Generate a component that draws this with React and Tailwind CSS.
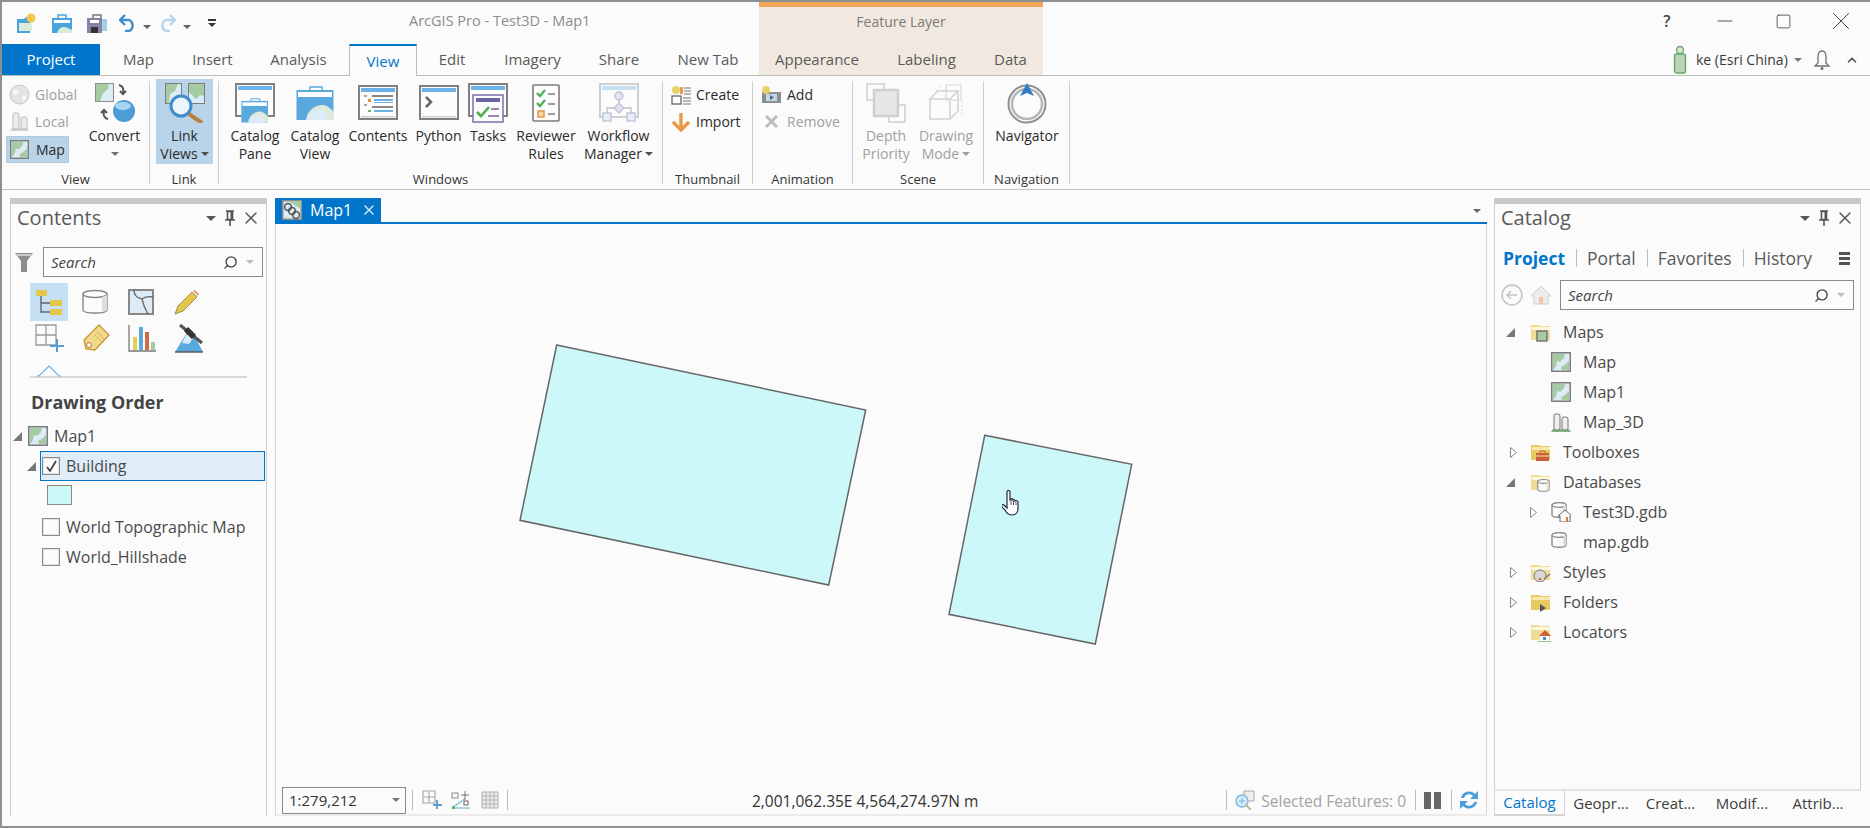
import { ChevronUp, Minus, Search, Square, X } from 'lucide-react';

const Caret = ({ className = 'border-t-[#606060]' }) => (
  <span className={`inline-block h-0 w-0 border-x-[4px] border-t-[4px] border-x-transparent ${className}`} />
);

const Sep = ({ h = 'h-[20px]' }) => <span className={`block w-px shrink-0 bg-[#bdbdbd] ${h}`} />;

const Ic = ({ w = 20, h = 20, vw, vh, children, className = '' }) => (
  <svg width={w} height={h} viewBox={`0 0 ${vw || w} ${vh || h}`} className={`shrink-0 ${className}`}>{children}</svg>
);

const MapIcon = ({ size = 20, dim }) => (
  <Ic w={size} h={size} vw={20} vh={20} className={dim ? 'opacity-60' : ''}>
    <rect x="0.75" y="0.75" width="18.5" height="18.5" fill="#dcebf5" stroke="#7c7c7c" strokeWidth="1.5" />
    <path d="M2 2h12l-1 4-4 4-3-1-1 5-3 4z" fill="#a5cba3" />
    <path d="M18 9l-4 4-4 2 1 3h7z" fill="#a5cba3" />
  </Ic>
);

const FolderBase = ({ children, light }) => (
  <Ic w={20} h={20}>
    <path d="M0 3h8l1 1h10v14H0z" fill={light ? '#f0dd95' : '#e6c95f'} />
    <path d="M1 5h18v3H1z" fill={light ? '#fdf7dd' : '#f7e9ad'} />
    {children}
  </Ic>
);

const Db = ({ x = 0, y = 0, s = 1 }) => (
  <g transform={`translate(${x} ${y}) scale(${s})`}>
    <path d="M1 3v10c0 3 14 3 14 0V3" fill="#fbfbfb" stroke="#8a8a8a" strokeWidth="1.4" />
    <ellipse cx="8" cy="3" rx="7" ry="2.4" fill="#fbfbfb" stroke="#8a8a8a" strokeWidth="1.4" />
    <path d="M12 5v10l3-2V3z" fill="#dcdcdc" />
  </g>
);

const Win = ({ children, stroke = '#808080', bar = '#6cb2e6', w = 40, h = 36 }) => (
  <svg width={w} height={h} viewBox="0 0 40 36" className="shrink-0">
    <rect x="1" y="1" width="38" height="33" fill="#fcfcfc" stroke={stroke} strokeWidth="2" />
    <rect x="3" y="3" width="34" height="4" fill={bar} />
    <rect x="3" y="31" width="34" height="1.5" fill="#cfcfcf" />
    {children}
  </svg>
);

const CatalogGlyph = ({ x = 0, y = 0, s = 1 }) => (
  <g transform={`translate(${x} ${y}) scale(${s})`}>
    <path d="M14 4V1h12v3" fill="none" stroke="#5aa9dd" strokeWidth="1.4" />
    <rect x="0.5" y="4" width="37" height="30" fill="#5aa9dd" />
    <rect x="2" y="6" width="34" height="5" fill="#fcfcfc" />
    <path d="M10 34c1-10 10-16 18-15 4 1 7 4 10 7v8z" fill="#dce9dc" />
    <path d="M10 34c3-7 9-11 15-10 4 1 6 5 7 10z" fill="#dcecf8" />
  </g>
);

const LargeBtn = ({ w, lines, icon, dim, caret, caretLine }) => (
  <div className={`flex shrink-0 flex-col items-center ${w} ${dim ? 'text-[#a0a0a0]' : 'text-[#2b2b2b]'}`}>
    <div className="flex h-[40px] items-center justify-center">{icon}</div>
    <div className="mt-[4px] text-center text-[14px] leading-[18px] whitespace-nowrap">
      {lines.map((l, i) => (
        <div key={l} className="flex items-center justify-center gap-[3px]">
          {l}
          {caret && i === lines.length - 1 && <Caret className={dim ? 'border-t-[#a0a0a0]' : 'border-t-[#505050]'} />}
        </div>
      ))}
      {caretLine && <div className="flex h-[18px] items-center justify-center"><Caret className="border-t-[#707070]" /></div>}
    </div>
  </div>
);

const Group = ({ w, label, children }) => (
  <div className={`mt-[5px] flex h-[103px] shrink-0 flex-col border-r border-[#cdcdcd] ${w}`}>
    <div className="flex min-h-0 flex-1 pt-[2px]">{children}</div>
    <div className="h-[10px] text-center text-[13px] leading-[10px] whitespace-nowrap text-[#333333]">{label}</div>
  </div>
);

const SmallBtn = ({ icon, label, dim, gap = 'gap-[5px]' }) => (
  <div className={`flex h-[27px] items-center whitespace-nowrap text-[14px] ${gap} ${dim ? 'text-[#a0a0a0]' : 'text-[#2b2b2b]'}`}>
    {icon}{label}
  </div>
);

const Tab = ({ w, label, active }) => (
  <div className={`flex shrink-0 items-center justify-center text-[15px] ${w} ${active
    ? 'relative z-10 -mb-px h-[32px] border-x border-t-2 border-x-[#bdbdbd] border-t-[#0075c9] bg-[#fbfbfb] text-[#0075c9]'
    : 'h-[31px] text-[#5a5a5a]'}`}>{label}</div>
);

const TitleBar = () => (
  <div className="flex h-[42px] items-center text-[#333]">
    <div className="flex w-[15px]" />
    <Ic w={20} h={20}>
      <path d="M0 6h7l2-2h4v16H0z" fill="#4aa3dd" /><path d="M2 10h13v8H2z" fill="#d8ecd8" /><circle cx="14" cy="5" r="4.5" fill="#f1c84c" />
    </Ic>
    <div className="w-[15px]" />
    <Ic w={20} h={20}>
      <path d="M6 5V2h8v3" fill="none" stroke="#4aa3dd" strokeWidth="1.5" /><rect y="5" width="20" height="15" fill="#4aa3dd" /><rect x="2" y="7" width="16" height="3" fill="#fff" /><path d="M5 20c2-6 7-7 11-5l4 2v3z" fill="#d8ecd8" />
    </Ic>
    <div className="w-[15px]" />
    <Ic w={20} h={20}>
      <path d="M6 5V2h8v3" fill="none" stroke="#777" strokeWidth="1.5" /><rect y="5" width="15" height="15" fill="#8a7fa8" /><rect x="3" y="7" width="9" height="3" fill="#fff" /><rect x="4" y="14" width="7" height="6" fill="#333" /><rect x="15" y="6" width="5" height="12" fill="#9ed0e8" />
    </Ic>
    <div className="w-[12px]" />
    <Ic w={18} h={18}>
      <path d="M6 1L1 6l5 5M1 6h9a6 6 0 0 1 0 11H6" fill="none" stroke="#3f8ecb" strokeWidth="2.4" />
    </Ic>
    <div className="ml-[6px]"><Caret /></div>
    <div className="w-[7px]" />
    <Ic w={18} h={18}>
      <path d="M12 1l5 5-5 5M17 6H8a6 6 0 0 0 0 11h4" fill="none" stroke="#b9d4e8" strokeWidth="2.4" />
    </Ic>
    <div className="ml-[7px]"><Caret /></div>
    <div className="ml-[17px] flex flex-col items-center gap-[2px]">
      <span className="block h-[2px] w-[8px] bg-[#333]" />
      <Caret className="border-t-[#333]" />
    </div>
    <div className="ml-[193px] pb-[4px] text-[14.5px] whitespace-nowrap text-[#8c8c8c]">ArcGIS Pro - Test3D - Map1</div>
  </div>
);

const Header = () => (
  <div className="flex">
    <div className="w-[757px] shrink-0">
      <TitleBar />
      <div className="flex h-[32px] border-b border-[#bdbdbd]">
        <div className="flex h-[31px] w-[98px] items-center justify-center bg-[#0075c9] text-[15px] text-white">Project</div>
        <Tab w="w-[77px]" label="Map" />
        <Tab w="w-[71px]" label="Insert" />
        <Tab w="w-[101px]" label="Analysis" />
        <Tab w="w-[68px]" label="View" active />
        <Tab w="w-[70px]" label="Edit" />
        <Tab w="w-[91px]" label="Imagery" />
        <Tab w="w-[82px]" label="Share" />
        <Tab w="w-[96px]" label="New Tab" />
      </div>
    </div>
    <div className="w-[284px] shrink-0">
      <div className="h-[42px] bg-[#f1e9df]">
        <div className="h-[5px] bg-[#efa656]" />
        <div className="pt-[5px] text-center text-[14px] leading-[20px] text-[#7a7a7a]">Feature Layer</div>
      </div>
      <div className="flex h-[32px] border-b border-[#bdbdbd] bg-[#f1e9df]">
        <Tab w="w-[116px]" label="Appearance" />
        <Tab w="w-[103px]" label="Labeling" />
        <Tab w="w-[65px]" label="Data" />
      </div>
    </div>
    <div className="min-w-0 flex-1">
      <div className="flex h-[42px] items-center pb-[4px] pl-[595px] text-[#444]">
        <span className="w-[58px] shrink-0 text-center text-[16px] font-semibold">?</span>
        <span className="flex w-[58px] shrink-0 justify-center"><Minus size={24} strokeWidth={0.9} /></span>
        <span className="flex w-[58px] shrink-0 justify-center"><Square size={17} strokeWidth={1.2} /></span>
        <span className="flex w-[58px] shrink-0 justify-center"><X size={30} strokeWidth={0.8} /></span>
      </div>
      <div className="flex h-[32px] items-center border-b border-[#bdbdbd]">
        <Ic w={14} h={30} vw={14} vh={30} className="ml-[630px]">
          <circle cx="7" cy="5" r="3.5" fill="#d7e8d5" stroke="#6aa36b" strokeWidth="1.3" />
          <rect x="1.5" y="9" width="11" height="19" rx="2" fill="#b6d7b3" stroke="#6aa36b" strokeWidth="1.3" />
        </Ic>
        <span className="ml-[9px] text-[14px] whitespace-nowrap text-[#3a3a3a]">ke (Esri China)</span>
        <span className="ml-[6px] flex"><Caret className="border-t-[#777]" /></span>
        <Ic w={18} h={22} className="ml-[11px]">
          <path d="M9 2c-3 0-4 3-4 6v6l-3 3h14l-3-3V8c0-3-1-6-4-6z" fill="none" stroke="#6f6f6f" strokeWidth="1.3" />
          <circle cx="9" cy="19.5" r="1.5" fill="#6f6f6f" />
        </Ic>
        <ChevronUp size={14} strokeWidth={3} className="ml-[14px] text-[#555]" />
      </div>
    </div>
  </div>
);

const Ribbon = () => (
  <div className="flex h-[114px] border-b border-[#c4c4c4]">
    <Group w="w-[148px]" label="View">
      <div className="-mt-[2px] ml-[4px] w-[63px] shrink-0">
        <SmallBtn dim label="Global" gap="gap-[5px] pl-[3px]" icon={
          <Ic w={21} h={21} className="opacity-70">
            <circle cx="10.5" cy="10.5" r="9.5" fill="#d9d9d9" stroke="#b3b3b3" /><path d="M4 5c3 1 5 0 6 3l-3 4-3-2zM13 12l4-1 0 4-3 3z" fill="#f5f5f5" />
          </Ic>
        } />
        <SmallBtn dim label="Local" gap="gap-[5px] pl-[3px]" icon={
          <Ic w={21} h={21}>
            <path d="M1 20l2-3h15l2 3z" fill="#d0d0d0" /><rect x="4" y="2" width="6" height="16" rx="2" fill="#ececec" stroke="#bdbdbd" /><rect x="12" y="6" width="6" height="12" rx="2" fill="#ececec" stroke="#bdbdbd" />
          </Ic>
        } />
        <div className="mt-[1px] flex h-[27px] items-center gap-[7px] border border-[#afcbe3] bg-[#b9d3e9] pl-[3px] text-[14px] text-[#2b2b2b]">
          <MapIcon size={19} />Map
        </div>
      </div>
      <div className="ml-[11px] shrink-0">
        <LargeBtn w="w-[69px]" lines={['Convert']} caretLine icon={
          <Ic w={40} h={40}>
            <rect x="0.5" y="0.5" width="18" height="18" fill="#dcebf5" stroke="#8c8c8c" />
            <path d="M1 1h13l-1 5-5 4-3 8H1z" fill="#a5cba3" />
            <path d="M24 2c4 1 5 4 4 8m-3-2l3 3 3-3" fill="none" stroke="#555" strokeWidth="2" />
            <path d="M13 36c-4-1-5-4-4-8m-3 2l3-3 3 3" fill="none" stroke="#555" strokeWidth="2" />
            <circle cx="29" cy="28" r="11" fill="#4d9cd6" /><ellipse cx="28" cy="23" rx="8" ry="4" fill="#a8d4f0" />
          </Ic>
        } />
      </div>
    </Group>
    <Group w="w-[69px]" label="Link">
      <div className="-mt-[4px] ml-[6px] flex h-[85px] w-[57px] shrink-0 justify-center bg-[#b9d3e9] pt-[4px]">
        <LargeBtn w="w-[57px]" lines={['Link', 'Views']} caret icon={
          <Ic w={40} h={40}>
            <rect x="0.5" y="0.5" width="16" height="20" fill="#dcebf5" stroke="#7c7c7c" /><path d="M1 1h12l-3 7-5 3-1 9H1z" fill="#a5cba3" />
            <rect x="23.5" y="0.5" width="16" height="20" fill="#dcebf5" stroke="#7c7c7c" /><path d="M24 1h15v12l-4-1-4 4-7-7z" fill="#a5cba3" />
            <circle cx="16" cy="23" r="10" fill="#eaf5fc" stroke="#3f8ecb" strokeWidth="3" />
            <path d="M24 31l13 9" stroke="#b9803e" strokeWidth="4" />
          </Ic>
        } />
      </div>
    </Group>
    <Group w="w-[444px]" label="Windows">
      <div className="ml-[6px] flex">
        <LargeBtn w="w-[60px]" lines={['Catalog', 'Pane']} icon={
          <svg width="40" height="40" viewBox="0 0 40 40">
            <rect x="1" y="1" width="38" height="32" fill="#fcfcfc" stroke="#808080" strokeWidth="2" />
            <rect x="3" y="3" width="34" height="4" fill="#6cb2e6" />
            <CatalogGlyph x="6" y="15" s="0.72" />
          </svg>
        } />
        <LargeBtn w="w-[60px]" lines={['Catalog', 'View']} icon={<svg width="38" height="36" viewBox="0 0 38 34"><CatalogGlyph /></svg>} />
        <LargeBtn w="w-[66px]" lines={['Contents']} icon={
          <Win>
            <path d="M6 11h3M6 20h3" stroke="#888" strokeWidth="1.5" />
            <rect x="14" y="10" width="21" height="2" fill="#888" /><rect x="16" y="14" width="19" height="2" fill="#6cb2e6" /><rect x="16" y="17" width="19" height="1" fill="#6cb2e6" />
            <rect x="14" y="21" width="21" height="2" fill="#888" /><rect x="16" y="25" width="19" height="2" fill="#6cb2e6" /><rect x="10" y="14" width="3" height="3" fill="#e78b3e" /><rect x="10" y="25" width="3" height="2" fill="#68b36b" />
          </Win>
        } />
        <LargeBtn w="w-[55px]" lines={['Python']} icon={
          <Win><path d="M7 12l5 5-5 5" fill="none" stroke="#666" strokeWidth="2.5" /></Win>
        } />
        <LargeBtn w="w-[44px]" lines={['Tasks']} icon={
          <svg width="40" height="40" viewBox="0 0 40 40">
            <rect x="1" y="1" width="38" height="32" fill="#fcfcfc" stroke="#808080" strokeWidth="2" />
            <rect x="3" y="3" width="34" height="4" fill="#6cb2e6" />
            <rect x="5" y="12" width="30" height="27" fill="#fcfcfc" stroke="#8279ae" strokeWidth="1.6" />
            <rect x="8" y="15" width="24" height="4" fill="#6a66a3" />
            <path d="M9 29l4 4 8-9" fill="none" stroke="#4caf50" strokeWidth="2.6" />
            <path d="M23 26h8M20 33h11" stroke="#6a66a3" strokeWidth="1.4" />
          </svg>
        } />
        <LargeBtn w="w-[72px]" lines={['Reviewer', 'Rules']} icon={
          <Ic w={28} h={38}>
            <rect x="1" y="1" width="26" height="36" rx="1" fill="#fcfcfc" stroke="#7c7c7c" strokeWidth="1.6" />
            <path d="M5 9l3 3 5-6M5 19l3 3 5-6" fill="none" stroke="#4caf50" strokeWidth="2.2" />
            <path d="M16 10h7M16 20h7M16 30h7" stroke="#7c7c7c" strokeWidth="1.5" />
            <rect x="6" y="27" width="6" height="6" fill="#f6d7ae" stroke="#e9933f" strokeWidth="1.5" />
          </Ic>
        } />
        <LargeBtn w="w-[73px]" lines={['Workflow', 'Manager']} caret icon={
          <svg width="40" height="40" viewBox="0 0 40 40">
            <rect x="1" y="1" width="38" height="33" fill="#fcfcfc" stroke="#cfcfcf" strokeWidth="2" />
            <rect x="3" y="3" width="34" height="4" fill="#c6dff2" />
            <circle cx="20" cy="13" r="4" fill="#e3e3ef" stroke="#bfc3dc" strokeWidth="1.4" />
            <path d="M20 17v3M15 25H8v5M25 25h7v5" fill="none" stroke="#c4c4c4" strokeWidth="1.4" />
            <path d="M20 20l5 5-5 5-5-5z" fill="#e3e3ef" stroke="#bfc3dc" strokeWidth="1.4" />
            <rect x="4" y="30" width="8" height="8" fill="#e8eef8" stroke="#bfc3dc" strokeWidth="1.4" />
            <rect x="28" y="30" width="8" height="8" fill="#e8eef8" stroke="#bfc3dc" strokeWidth="1.4" />
          </svg>
        } />
      </div>
    </Group>
    <Group w="w-[90px]" label="Thumbnail">
      <div className="ml-[8px] -mt-[2px]">
        <SmallBtn label="Create" gap="gap-[5px]" icon={
          <Ic w={20} h={20}>
            <circle cx="5" cy="5" r="4" fill="#e6d26a" /><rect x="1" y="11" width="9" height="8" fill="#fcfcfc" stroke="#666" strokeWidth="1.3" />
            <rect x="9" y="2" width="3" height="7" fill="#e89a4f" />
            <path d="M13 3h7M13 6h7M13 9h7M12 13h8M12 16h8M12 19h8" stroke="#777" strokeWidth="1.2" />
          </Ic>
        } />
        <SmallBtn label="Import" gap="gap-[5px]" icon={
          <Ic w={20} h={20}>
            <path d="M10 1v16M2 10l8 8 8-8" fill="none" stroke="#e99a46" strokeWidth="3.4" />
          </Ic>
        } />
      </div>
    </Group>
    <Group w="w-[100px]" label="Animation">
      <div className="ml-[8px] -mt-[2px]">
        <SmallBtn label="Add" gap="gap-[6px]" icon={
          <Ic w={20} h={20}>
            <rect x="1" y="7" width="19" height="11" fill="#8d8d8d" /><rect x="5" y="9" width="11" height="7" fill="#bcd9ee" /><path d="M9 10l4 2.5-4 2.5z" fill="#666" /><circle cx="5" cy="5" r="4" fill="#e6d26a" />
          </Ic>
        } />
        <SmallBtn dim label="Remove" gap="gap-[9px] pl-[4px]" icon={
          <Ic w={13} h={13}><path d="M1 1l11 11M12 1L1 12" stroke="#bdbdbd" strokeWidth="3" /></Ic>
        } />
      </div>
    </Group>
    <Group w="w-[131px]" label="Scene">
      <div className="flex">
        <LargeBtn dim w="w-[66px]" lines={['Depth', 'Priority']} icon={
          <Ic w={40} h={40}>
            <rect x="1" y="1" width="17" height="16" fill="#fcfcfc" stroke="#cfcfcf" strokeWidth="1.5" />
            <rect x="23" y="22" width="16" height="17" fill="#fcfcfc" stroke="#cfcfcf" strokeWidth="1.5" />
            <rect x="8" y="7" width="24" height="26" fill="#e7e7e7" stroke="#cfcfcf" strokeWidth="2.5" />
          </Ic>
        } />
        <LargeBtn dim caret w="w-[54px]" lines={['Drawing', 'Mode']} icon={
          <Ic w={36} h={40}>
            <path d="M2 16h20v20H2zM2 16l8-8h20l-8 8M22 36l8-8V8" fill="#fbfbfb" stroke="#d2d2d2" strokeWidth="1.5" />
            <path d="M18 2h15v15H18z" fill="none" stroke="#d8d8d8" strokeWidth="1.2" />
            <path d="M8 8l6-6M34 18v14" stroke="#d8d8d8" strokeDasharray="2 2" />
          </Ic>
        } />
      </div>
    </Group>
    <Group w="w-[86px]" label="Navigation">
      <LargeBtn w="w-[86px]" lines={['Navigator']} icon={
        <Ic w={42} h={42}>
          <circle cx="21" cy="22" r="18.5" fill="none" stroke="#8f8f8f" strokeWidth="2" />
          <circle cx="21" cy="22" r="15" fill="none" stroke="#b5b5b5" strokeWidth="2.4" />
          <path d="M21 1l7 13-7-3-7 3z" fill="#2f7fc4" />
        </Ic>
      } />
    </Group>
  </div>
);

const PaneHeader = ({ title }) => (
  <div className="flex h-[28px] shrink-0 items-center">
    <span className="ml-[6px] text-[20px] text-[#5a5a5a]">{title}</span>
    <div className="ml-auto mr-[5px] flex items-center text-[#555]">
      <Caret className="border-x-[5px] border-t-[5px] border-t-[#555]" />
      <Ic w={12} h={16} className="ml-[8px]">
        <path d="M2 1h8M3.500 1.500h5v8h-5zM1 10h10M6 10v6" fill="none" stroke="#555" strokeWidth="1.6" />
        <path d="M6.500 2h2v7h-2z" fill="#555" />
      </Ic>
      <X size={20} strokeWidth={1.7} className="ml-[5px]" />
    </div>
  </div>
);

const SearchBox = ({ w }) => (
  <div className={`flex h-[30px] items-center border border-[#8a8a8a] bg-[#fcfcfc] pl-[7px] ${w}`}>
    <span className="text-[15px] italic text-[#444]">Search</span>
    <Search size={15} strokeWidth={2.2} className="ml-auto -scale-x-100 text-[#444]" />
    <span className="mx-[8px] flex"><Caret className="border-t-[#bbb]" /></span>
  </div>
);

const ArrowOpen = ({ className = '' }) => (
  <span className={`h-0 w-0 shrink-0 border-b-[9px] border-l-[9px] border-b-[#777] border-l-transparent ${className}`} />
);

const ArrowClosed = ({ className = '' }) => (
  <Ic w={7} h={11} className={className}><path d="M.5.5l6 5-6 5z" fill="#fcfcfc" stroke="#888" /></Ic>
);

const Check = ({ checked }) => (
  <span className="flex h-[18px] w-[18px] shrink-0 items-center justify-center border border-[#8a8a8a] bg-[#fcfcfc] outline-1 -outline-offset-2 outline-[#e4e4e4]">
    {checked && <svg width="13" height="13" viewBox="0 0 13 13"><path d="M2 7l3 4 6-10" fill="none" stroke="#444" strokeWidth="1.8" /></svg>}
  </span>
);

const ContentsPane = () => (
  <div className="ml-[8px] flex w-[257px] shrink-0 flex-col border-x border-[#cfcfcf] border-t-[6px] border-t-[#c8c8c8] bg-[#fbfbfb]">
    <PaneHeader title="Contents" />
    <div className="mt-[15px] flex items-center">
      <Ic w={18} h={21} className="ml-[4px]">
        <path d="M0 1h18l-6 8v11H6V9z" fill="#8d8d8d" /><path d="M1 2h16l-1 2H2z" fill="#c9c9c9" />
      </Ic>
      <SearchBox w="ml-[10px] w-[220px]" />
    </div>
    <div className="ml-[19px] mt-[6px] grid w-[190px] grid-cols-[52px_46px_46px_46px] grid-rows-[38px_34px]">
      <div className="flex h-[38px] w-[38px] items-center justify-center bg-[#c6e0f4]">
        <Ic w={28} h={28}>
          <rect x="1" y="2" width="11" height="6" fill="#e6c74d" /><rect x="15" y="12" width="12" height="6" fill="#e6c74d" /><rect x="15" y="21" width="12" height="6" fill="#e6c74d" />
          <path d="M6 8v16h9M6 15h9" fill="none" stroke="#666" strokeWidth="1.4" />
        </Ic>
      </div>
      <div className="flex items-center">
        <Ic w={26} h={26}>
          <path d="M1 5v16c0 4 24 4 24 0V5" fill="#fcfcfc" stroke="#888" strokeWidth="1.4" /><ellipse cx="13" cy="5" rx="12" ry="3.5" fill="#fcfcfc" stroke="#888" strokeWidth="1.4" /><path d="M20 8v15l5-2V6z" fill="#dedede" />
        </Ic>
      </div>
      <div className="flex items-center">
        <Ic w={26} h={26}>
          <rect x="1" y="1" width="24" height="24" fill="#dcebf5" stroke="#888" strokeWidth="2" /><path d="M6 1c0 5 3 8 8 9 1 5 3 10 6 15M14 10c3-2 6-3 11-2" fill="none" stroke="#666" strokeWidth="1.3" />
        </Ic>
      </div>
      <div className="flex items-center">
        <Ic w={26} h={26}>
          <path d="M1 25l3-8L18 3l5 5L9 22z" fill="#e6c74d" stroke="#8a7a30" strokeWidth=".8" /><path d="M19 2l2-1 4 4-1 2z" fill="#ea9a7c" />
        </Ic>
      </div>
      <div className="ml-[5px] flex items-center">
        <Ic w={29} h={29}>
          <path d="M1 1h20v20H1zM1 11h20M11 1v20" fill="none" stroke="#9a9a9a" strokeWidth="1.3" /><path d="M22 15v13M15 22h14" stroke="#5b9bd0" strokeWidth="2" />
        </Ic>
      </div>
      <div className="flex items-center">
        <Ic w={28} h={28}>
          <path d="M17 1l10 10-14 15-9-1-2-9z" fill="#f2d98a" stroke="#c49a3a" strokeWidth="1.3" /><circle cx="7" cy="21" r="2.4" fill="#fff" stroke="#c46a3a" />
          <path d="M12 10l8 8M15 8l7 7" stroke="#d8b860" />
        </Ic>
      </div>
      <div className="flex items-center">
        <Ic w={28} h={28}>
          <path d="M1 1v26h27" fill="none" stroke="#777" strokeWidth="1.3" /><rect x="5" y="13" width="4" height="13" fill="#e6cf55" /><rect x="11" y="3" width="4" height="23" fill="#5aa9dd" /><rect x="17" y="8" width="4" height="18" fill="#cf6a45" /><rect x="23" y="18" width="4" height="8" fill="#a5cba3" />
        </Ic>
      </div>
      <div className="flex items-center">
        <Ic w={30} h={30}>
          <path d="M1 29L14 8h4l11 21z" fill="#5aa9dd" /><path d="M12 12l-4 8 7 1 6-9z" fill="#d9ecf8" />
          <path d="M6 2l22 18" stroke="#555" strokeWidth="3" /><path d="M12 6l8 8" stroke="#333" strokeWidth="6" /><path d="M1 29h28" stroke="#555" strokeWidth="1.4" />
        </Ic>
      </div>
    </div>
    <div className="relative mb-[12px] ml-[19px] mt-[21px] h-[2px] w-[217px] bg-[#d8d8d8]">
      <Ic w={24} h={12} className="absolute -top-[11px] left-[7px]">
        <path d="M0 11h2L12 1l10 10h2" fill="#fbfbfb" stroke="#6cb2e6" strokeWidth="1.2" />
      </Ic>
    </div>
    <div className="ml-[20px] text-[18px] font-bold leading-[24px] text-[#444]">Drawing Order</div>
    <div className="mt-[7px] flex h-[30px] items-center text-[16px] text-[#4a4a4a]">
      <ArrowOpen className="ml-[2px]" />
      <div className="ml-[6px]"><MapIcon /></div>
      <span className="ml-[6px]">Map1</span>
    </div>
    <div className="flex h-[30px] items-center text-[16px] text-[#4a4a4a]">
      <ArrowOpen className="ml-[16px]" />
      <div className="ml-[4px] mr-[1px] flex h-[30px] flex-1 items-center border border-[#0075c9] bg-[#deedf8] pl-[1px]">
        <Check checked />
        <span className="ml-[6px]">Building</span>
      </div>
    </div>
    <div className="ml-[36px] mt-[4px] h-[20px] w-[25px] border border-[#8a8a8a] bg-[#ccf8fa]" />
    <div className="mt-[7px] flex h-[30px] items-center pl-[31px] text-[16px] text-[#4a4a4a]">
      <Check /><span className="ml-[6px] whitespace-nowrap">World Topographic Map</span>
    </div>
    <div className="flex h-[30px] items-center pl-[31px] text-[16px] text-[#4a4a4a]">
      <Check /><span className="ml-[6px]">World_Hillshade</span>
    </div>
  </div>
);

const ToolIcon = ({ children }) => <Ic w={20} h={20}>{children}</Ic>;

const MapPane = () => (
  <div className="ml-[8px] flex w-[1212px] shrink-0 flex-col">
    <div className="flex h-[26px] shrink-0 items-start border-b-2 border-[#0075c9]">
      <div className="flex h-[24px] w-[106px] items-center bg-[#0075c9] text-[16px] text-white">
        <Ic w={20} h={20} className="ml-[7px]">
          <rect x=".75" y=".75" width="18.5" height="18.5" fill="#dcebf5" stroke="#8c8c8c" strokeWidth="1.5" /><path d="M6 1h13v8z" fill="#a5cba3" />
          <circle cx="6" cy="7" r="3.4" fill="none" stroke="#555" strokeWidth="1.5" /><circle cx="10" cy="11" r="3.4" fill="none" stroke="#555" strokeWidth="1.5" /><circle cx="14" cy="15" r="3.4" fill="none" stroke="#555" strokeWidth="1.5" />
        </Ic>
        <span className="ml-[8px]">Map1</span>
        <X size={16} strokeWidth={2} className="ml-[9px] text-[#d5e9f7]" />
      </div>
      <span className="ml-auto mr-[6px] mt-[11px] flex"><Caret className="border-t-[#666]" /></span>
    </div>
    <div className="flex min-h-0 flex-1 flex-col border-x border-b-2 border-[#d4d4d4] border-b-[#ebebeb] bg-[#fbfbfb]">
      <div className="relative min-h-0 flex-1">
        <svg width="1210" height="562" viewBox="276 224 1210 562" className="block">
          <polygon points="556.7,345 865.7,410 828.7,585 520,520.3" fill="#ccf8fa" stroke="#666666" strokeWidth="1.5" />
          <polygon points="984.7,435.3 1131.7,464.3 1095.3,644 949,614.3" fill="#ccf8fa" stroke="#666666" strokeWidth="1.5" />
        </svg>
        <svg width="20" height="26" viewBox="0 0 20 26" className="absolute left-[726px] top-[266px]">
          <path d="M5 2c0-2 3-2 3 0v8l1-.5V9c1-1 2 0 2 1 1-1 2 0 2 1 1-1 3 0 3 1v7c0 3-2 6-6 6-3 0-5-1-7-5l-3-3c-1-2 1-3 2-2l3 3z" fill="#fff" stroke="#1f2a3d" strokeWidth="1.2" />
          <path d="M9 10v5M11.500 11v4M14 12v3" stroke="#1f2a3d" strokeWidth=".8" />
        </svg>
      </div>
      <div className="flex h-[28px] shrink-0 items-center text-[15.5px] text-[#333]">
        <div className="ml-[6px] flex h-[27px] w-[124px] items-center border border-[#8a8a8a] pl-[6px] text-[15px]">
          1:279,212
          <span className="ml-auto mr-[5px] flex"><Caret className="border-x-[3px] border-t-[#777]" /></span>
        </div>
        <div className="ml-[6px]"><Sep /></div>
        <div className="ml-[9px] flex gap-[9px]">
          <ToolIcon><path d="M1 1h12v12H1zM1 7h12M7 1v12" fill="none" stroke="#aaa" strokeWidth="1.2" /><path d="M15 10v9M11 15h9" stroke="#5b9bd0" strokeWidth="1.8" /></ToolIcon>
          <ToolIcon><rect x="1" y="3" width="6" height="5" fill="none" stroke="#888" /><path d="M14 1v9M10 5h8" stroke="#777" /><path d="M2 17L14 9" stroke="#5aa9dd" strokeWidth="1.5" strokeDasharray="2 1" /><rect x="1" y="16" width="3" height="3" fill="#68b36b" /><rect x="13" y="11" width="4" height="4" fill="none" stroke="#666" /><path d="M4 18h15" stroke="#5aa9dd" /></ToolIcon>
          <ToolIcon><path d="M2 2h16v16H2zM2 6h16M2 10h16M2 14h16M6 2v16M10 2v16M14 2v16" fill="#eee" stroke="#b0b0b0" /></ToolIcon>
        </div>
        <div className="ml-[7px]"><Sep /></div>
        <span className="ml-[244px] whitespace-nowrap pt-[3px]">2,001,062.35E 4,564,274.97N m</span>
        <div className="ml-auto"><Sep /></div>
        <div className="ml-[8px]">
          <ToolIcon>
            <path d="M9 1h10v10H9z" fill="#eee" stroke="#aaa" /><circle cx="7" cy="11" r="6" fill="#d5ebf8" stroke="#7db7e0" strokeWidth="1.4" /><path d="M4 11h6M7 8v6" stroke="#7db7e0" /><path d="M11 15l5 5" stroke="#c9b18a" strokeWidth="2" />
          </ToolIcon>
        </div>
        <span className="ml-[6px] whitespace-nowrap pt-[3px] text-[#a3a3a3]">Selected Features: 0</span>
        <div className="ml-[9px]"><Sep /></div>
        <div className="ml-[8px] flex gap-[3px]">
          <span className="h-[17px] w-[7px] bg-[#666]" /><span className="h-[17px] w-[7px] bg-[#666]" />
        </div>
        <div className="ml-[10px]"><Sep /></div>
        <Ic w={20} h={22} className="ml-[7px] mr-[7px]">
          <path d="M2 9C3 3 11 0 16 5l3-3v8h-8l3-3C11 4 6 5 5 9zM18 13c-1 6-9 9-14 4l-3 3v-8h8l-3 3c3 3 8 2 9-2z" fill="#4a9fdc" />
        </Ic>
      </div>
    </div>
  </div>
);

const TreeRow = ({ indent, arrow, icon, label }) => (
  <div className="flex h-[30px] items-center text-[16px] text-[#4a4a4a]">
    <div className={`flex w-[21px] items-center justify-center ${indent}`}>
      {arrow === 'open' && <ArrowOpen />}
      {arrow === 'closed' && <ArrowClosed className="ml-[6px]" />}
    </div>
    <div className="ml-[10px]">{icon}</div>
    <span className="ml-[12px]">{label}</span>
  </div>
);

const Bottom = ({ label, w, active }) => (
  <div className={`flex h-[25px] items-center justify-center whitespace-nowrap text-[15px] ${w} ${active ? 'border-x border-b-2 border-x-[#d4d4d4] border-b-[#d4d4d4] bg-[#fcfcfc] text-[#0075c9]' : 'text-[#3d3d3d]'}`}>{label}</div>
);

const CatalogPane = () => (
  <div className="ml-[7px] flex w-[367px] shrink-0 flex-col">
    <div className="flex min-h-0 flex-1 flex-col border-x border-b-2 border-[#cfcfcf] border-t-[6px] border-b-[#e4e4e4] border-t-[#c8c8c8] bg-[#fbfbfb]">
      <PaneHeader title="Catalog" />
      <div className="mt-[10px] flex h-[32px] shrink-0 items-center text-[17.5px] text-[#5a5a5a]">
        <span className="ml-[8px] font-bold text-[#0075c9]">Project</span>
        <span className="ml-[11px]"><Sep h="h-[18px]" /></span>
        <span className="ml-[10px]">Portal</span>
        <span className="ml-[11px]"><Sep h="h-[18px]" /></span>
        <span className="ml-[10px]">Favorites</span>
        <span className="ml-[11px]"><Sep h="h-[18px]" /></span>
        <span className="ml-[10px]">History</span>
        <div className="ml-auto mr-[10px] flex flex-col gap-[2px]">
          <span className="h-[3px] w-[11px] bg-[#555]" /><span className="h-[3px] w-[11px] bg-[#555]" /><span className="h-[3px] w-[11px] bg-[#555]" />
        </div>
      </div>
      <div className="mt-[6px] flex items-center">
        <Ic w={22} h={22} className="ml-[6px]">
          <circle cx="11" cy="11" r="10" fill="none" stroke="#c4c4c4" strokeWidth="1.5" /><path d="M16 11H6M10 7l-4 4 4 4" fill="none" stroke="#c4c4c4" strokeWidth="1.5" />
        </Ic>
        <Ic w={20} h={20} className="ml-[8px]">
          <path d="M10 1L0 11h3v8h14v-8h3z" fill="#ededed" stroke="#cfcfcf" /><rect x="8" y="12" width="4" height="7" fill="#f1c6a8" />
        </Ic>
        <SearchBox w="ml-[9px] w-[294px]" />
      </div>
      <div className="mt-[7px]">
        <TreeRow arrow="open" indent="ml-[5px]" label="Maps" icon={
          <FolderBase light><rect x="6" y="9" width="10" height="10" fill="#a5cba3" stroke="#666" strokeWidth="1.3" /></FolderBase>
        } />
        <TreeRow indent="ml-[25px]" label="Map" icon={<MapIcon />} />
        <TreeRow indent="ml-[25px]" label="Map1" icon={<MapIcon />} />
        <TreeRow indent="ml-[25px]" label="Map_3D" icon={
          <Ic w={20} h={20}>
            <path d="M0 20l2-3h16l2 3z" fill="#7fb57f" /><rect x="3" y="2" width="6" height="16" rx="2" fill="#eee" stroke="#777" /><rect x="11" y="5" width="6" height="13" rx="2" fill="#eee" stroke="#777" />
          </Ic>
        } />
        <TreeRow arrow="closed" indent="ml-[5px]" label="Toolboxes" icon={
          <FolderBase><rect x="5" y="11" width="13" height="8" fill="#c95f3a" /><path d="M5 14h13" stroke="#f5e7ae" /><path d="M9 11V9h5v2" fill="none" stroke="#c95f3a" /></FolderBase>
        } />
        <TreeRow arrow="open" indent="ml-[5px]" label="Databases" icon={<FolderBase light><Db x="6" y="7" s=".8" /></FolderBase>} />
        <TreeRow arrow="closed" indent="ml-[25px]" label="Test3D.gdb" icon={
          <Ic w={20} h={20}>
            <Db />
            <path d="M14 8l7 6h-2v6H9v-6H7z" fill="#fbfbfb" stroke="#666" /><rect x="15" y="15" width="2" height="5" fill="#c9824c" />
          </Ic>
        } />
        <TreeRow indent="ml-[25px]" label="map.gdb" icon={<Ic w={20} h={20}><Db /></Ic>} />
        <TreeRow arrow="closed" indent="ml-[5px]" label="Styles" icon={
          <FolderBase light><circle cx="9" cy="14" r="6" fill="#d8d8d8" stroke="#777" /><path d="M13 17l6-5" stroke="#777" strokeWidth="1.4" /><circle cx="9" cy="17" r="1.500" fill="#d9773f" /></FolderBase>
        } />
        <TreeRow arrow="closed" indent="ml-[5px]" label="Folders" icon={<FolderBase><path d="M9 12l6 4-6 4z" fill="#555" /></FolderBase>} />
        <TreeRow arrow="closed" indent="ml-[5px]" label="Locators" icon={
          <FolderBase light><path d="M8 14l6-6 6 6z" fill="#d25a3a" /><rect x="9" y="14" width="9" height="6" fill="#fff" /><rect x="12" y="15" width="3" height="3" fill="#3f8ecb" /><path d="M7 20h13" stroke="#5cb85c" strokeWidth="1.5" /></FolderBase>
        } />
      </div>
    </div>
    <div className="flex h-[25px] shrink-0">
      <Bottom w="w-[71px]" label="Catalog" active />
      <Bottom w="w-[72px]" label="Geopr..." />
      <Bottom w="w-[67px]" label="Creat..." />
      <Bottom w="w-[76px]" label="Modif..." />
      <Bottom w="w-[76px]" label="Attrib..." />
    </div>
  </div>
);

const App = () => (
  <div className="h-[828px] w-[1870px] overflow-hidden border-t-2 border-b-2 border-l-2 border-[#8f8f8f] bg-[#fbfbfb] font-['Open_Sans',sans-serif]">
    <Header />
    <Ribbon />
    <div className="flex h-[636px] pb-[10px] pt-[8px]">
      <ContentsPane />
      <MapPane />
      <CatalogPane />
    </div>
  </div>
);

export default App;
